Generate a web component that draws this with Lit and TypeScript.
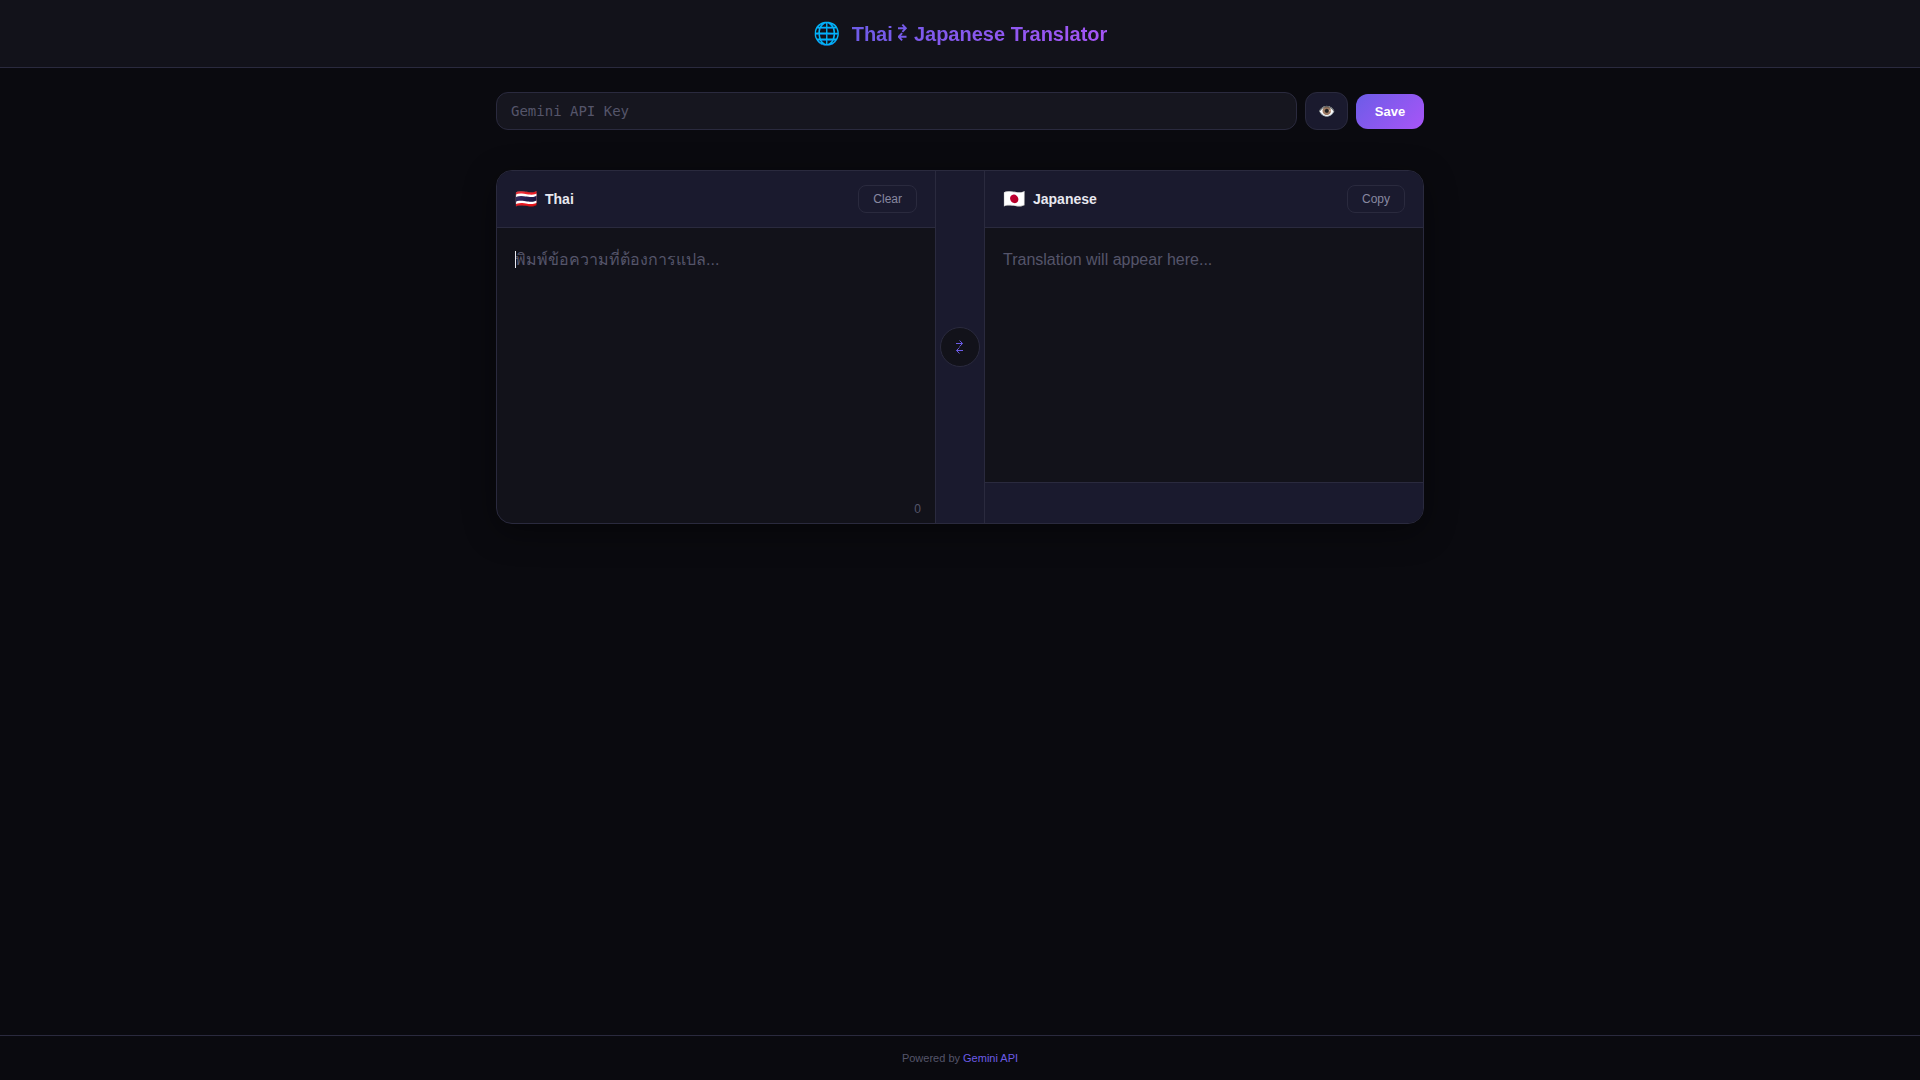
import { LitElement, html, css } from "lit";
import { customElement, state, query } from "lit/decorators.js";

@customElement("app-root")
export class AppRoot extends LitElement {
  static styles = css`
    :host {
      --bg: #0a0a0f;
      --surface: #12121a;
      --raised: #1a1a2e;
      --field: #16161f;
      --line: #2a2a3e;
      --text: #e8e8f0;
      --text-soft: #8888a0;
      --text-muted: #55556a;
      --accent: #6c5ce7;
      --gradient: linear-gradient(135deg, #6c5ce7, #a855f7);
      display: flex;
      flex-direction: column;
      min-height: 100vh;
      background: var(--bg);
      color: var(--text);
      font-family: "Liberation Sans", sans-serif;
      font-size: 16px;
    }
    * {
      box-sizing: border-box;
    }
    button,
    input,
    textarea {
      font-family: inherit;
      margin: 0;
    }
    button {
      cursor: pointer;
    }
    .arrows {
      fill: none;
      stroke: currentColor;
      stroke-linejoin: miter;
    }
    .top {
      display: flex;
      align-items: center;
      justify-content: center;
      gap: 12px;
      height: 68px;
      background: var(--surface);
      border-bottom: 1px solid var(--line);
    }
    .globe {
      font-size: 22px;
      line-height: 32px;
    }
    .title {
      margin: 0;
      font-size: 20px;
      line-height: 24px;
      font-weight: 700;
      background: var(--gradient);
      -webkit-background-clip: text;
      background-clip: text;
      color: transparent;
    }
    .title .arrows {
      width: 10px;
      height: 17px;
      stroke: #765be9;
      stroke-width: 1.5;
      vertical-align: baseline;
    }
    .main {
      flex: 1;
      width: 100%;
      max-width: 960px;
      margin: 0 auto;
      padding: 24px 16px;
    }
    .key {
      display: flex;
      align-items: center;
      gap: 8px;
      margin-bottom: 40px;
    }
    .key-input {
      flex: 1;
      min-width: 0;
      height: 38px;
      padding: 0 14px;
      border: 1px solid var(--line);
      border-radius: 12px;
      background: var(--field);
      color: var(--text);
      font-family: "DejaVu Sans Mono", monospace;
      font-size: 14px;
      outline: none;
    }
    .key-input::placeholder,
    .source::placeholder {
      color: var(--text-muted);
      opacity: 1;
    }
    .eye {
      width: 43px;
      height: 38px;
      padding: 0;
      border: 1px solid var(--line);
      border-radius: 12px;
      background: var(--raised);
      color: var(--text);
      font-size: 14px;
    }
    .save {
      height: 35px;
      padding: 0 18px;
      border: 0;
      border-radius: 12px;
      background: var(--gradient);
      color: #fff;
      font-size: 13px;
      font-weight: 700;
      min-width: 68px;
    }
    .card {
      display: grid;
      grid-template-columns: minmax(0, 1fr) 50px minmax(0, 1fr);
      border: 1px solid var(--line);
      border-radius: 16px;
      overflow: hidden;
      background: var(--surface);
      box-shadow: 0 8px 32px rgba(0, 0, 0, 0.4);
    }
    .panel {
      display: flex;
      flex-direction: column;
    }
    .bar {
      display: flex;
      align-items: center;
      justify-content: space-between;
      padding: 14px 18px;
      background: var(--raised);
      border-bottom: 1px solid var(--line);
    }
    .lang {
      display: flex;
      align-items: center;
      gap: 8px;
      font-size: 14px;
      line-height: 16px;
      font-weight: 700;
    }
    .flag {
      font-size: 18px;
      font-weight: 400;
    }
    .small {
      height: 28px;
      padding: 0 14px;
      border: 1px solid var(--line);
      border-radius: 8px;
      background: transparent;
      color: var(--text-soft);
      font-size: 12px;
    }
    .entry {
      position: relative;
      flex: 1;
      display: flex;
    }
    .source {
      flex: 1;
      min-width: 0;
      min-height: 275px;
      padding: 18px;
      border: 0;
      outline: none;
      resize: none;
      background: transparent;
      color: var(--text);
      caret-color: transparent;
      font-size: 16px;
      line-height: 28px;
    }
    .source.filled {
      caret-color: var(--text);
    }
    .caret {
      position: absolute;
      left: 18px;
      top: 23px;
      width: 1px;
      height: 17px;
      background: var(--text);
      pointer-events: none;
    }
    .count {
      padding: 0 14px 8px;
      text-align: right;
      color: var(--text-muted);
      font-size: 12px;
      line-height: 12px;
    }
    .middle {
      display: flex;
      align-items: center;
      justify-content: center;
      background: var(--raised);
      border-left: 1px solid var(--line);
      border-right: 1px solid var(--line);
    }
    .swap {
      display: flex;
      align-items: center;
      justify-content: center;
      width: 40px;
      height: 40px;
      padding: 0;
      border: 1px solid var(--line);
      border-radius: 50%;
      background: var(--surface);
      color: var(--accent);
    }
    .swap .arrows {
      width: 8px;
      height: 14px;
      stroke-width: 1;
    }
    .result {
      flex: 1;
      padding: 18px;
      line-height: 28px;
      color: var(--text-muted);
    }
    .reading {
      height: 41px;
      background: var(--raised);
      border-top: 1px solid var(--line);
    }
    .foot {
      height: 45px;
      border-top: 1px solid var(--line);
      text-align: center;
      color: var(--text-muted);
      font-size: 11px;
      line-height: 44px;
    }
    .foot a {
      color: var(--accent);
      text-decoration: none;
    }
  `;

  @state() private text = "";
  @state() private showKey = false;
  @query(".source") private source!: HTMLTextAreaElement;

  firstUpdated() {
    this.source.focus();
  }

  private clear() {
    this.text = "";
    this.source.focus();
  }

  /* A short right arrow above a short left arrow. */
  private arrows() {
    return html`<svg class="arrows" viewBox="0 0 7 14" preserveAspectRatio="xMinYMid meet" aria-hidden="true">
      <path d="M0 3.5H6.3M3.6 .5L6.5 3.5L3.6 6.5M7 10.5H.7M3.4 7.5L.5 10.5L3.4 13.5" />
    </svg>`;
  }

  render() {
    return html`
      <header class="top">
        <span class="globe">🌐</span>
        <h1 class="title">Thai ${this.arrows()} Japanese Translator</h1>
      </header>
      <main class="main">
        <form class="key" @submit=${(e: Event) => e.preventDefault()}>
          <input class="key-input" type=${this.showKey ? "text" : "password"}
            aria-label="Gemini API Key" placeholder="Gemini API Key" autocomplete="off" />
          <button class="eye" type="button" aria-label="Show key"
            @click=${() => (this.showKey = !this.showKey)}>👁️</button>
          <button class="save" type="submit">Save</button>
        </form>
        <div class="card">
          <section class="panel">
            <div class="bar">
              <label class="lang" for="source"><span class="flag">🇹🇭</span>Thai</label>
              <button class="small" type="button" @click=${this.clear}>Clear</button>
            </div>
            <div class="entry">
              <textarea class="source ${this.text ? "filled" : ""}" id="source"
                placeholder="พิมพ์ข้อความที่ต้องการแปล..."
                .value=${this.text}
                @input=${(e: Event) => (this.text = (e.target as HTMLTextAreaElement).value)}></textarea>
              ${this.text ? "" : html`<span class="caret"></span>`}
            </div>
            <div class="count">${this.text.length}</div>
          </section>
          <div class="middle">
            <button class="swap" type="button" aria-label="Swap languages">${this.arrows()}</button>
          </div>
          <section class="panel">
            <div class="bar">
              <div class="lang"><span class="flag">🇯🇵</span>Japanese</div>
              <button class="small" type="button">Copy</button>
            </div>
            <div class="result">Translation will appear here...</div>
            <div class="reading"></div>
          </section>
        </div>
      </main>
      <footer class="foot">
        Powered by <a href="#gemini">Gemini API</a>
      </footer>
    `;
  }
}
